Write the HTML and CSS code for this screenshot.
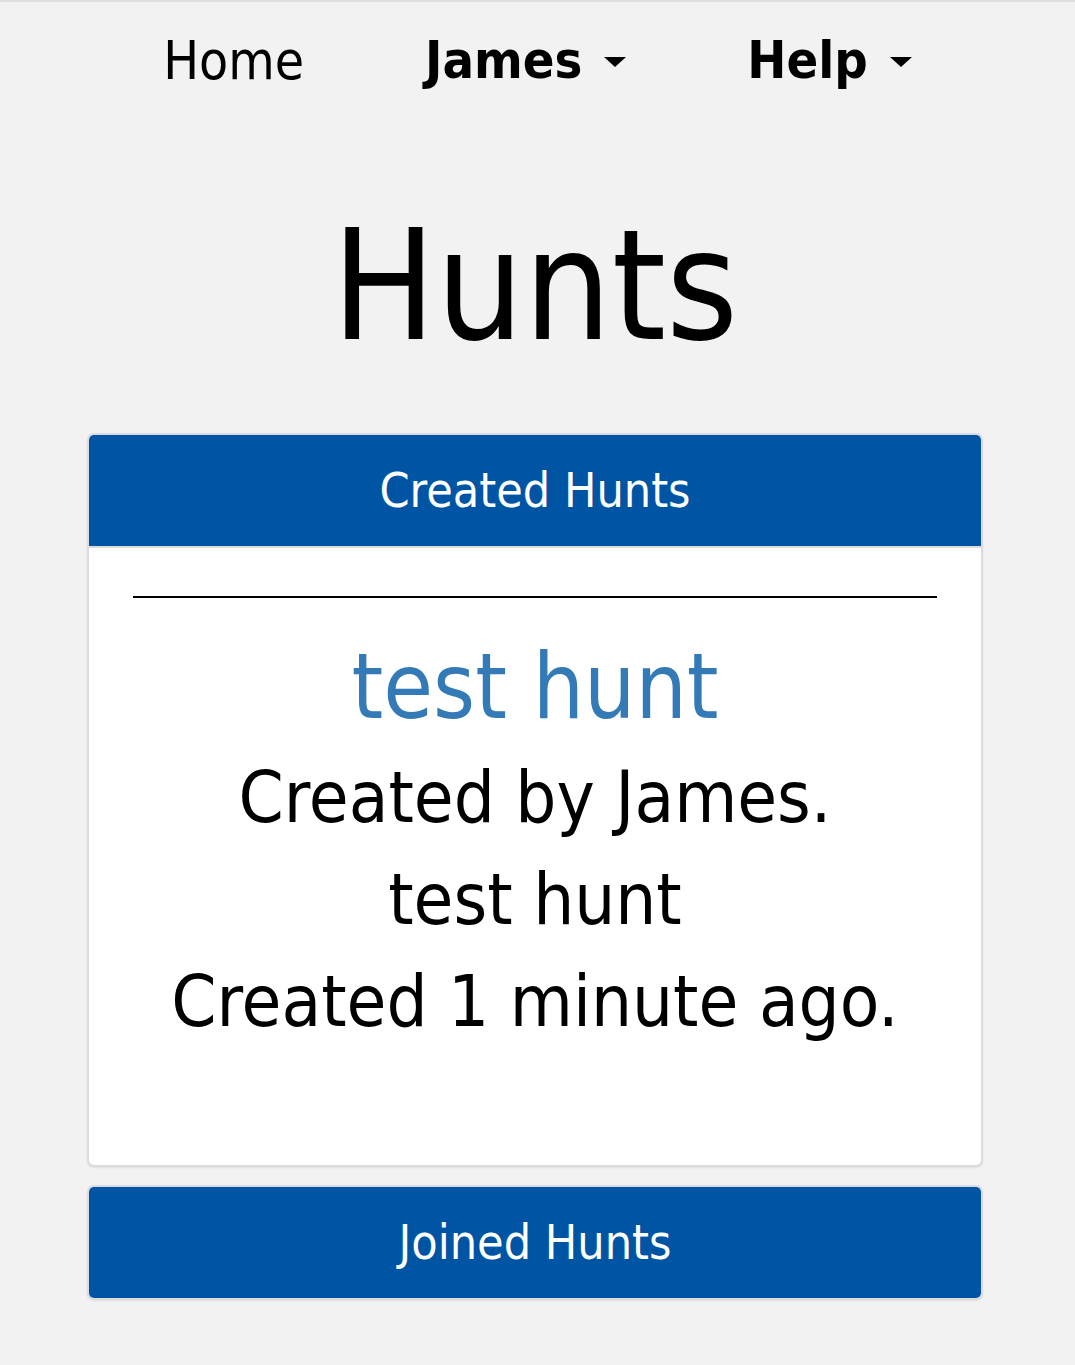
FILE: index.html
```html
<!DOCTYPE html>
<html lang="en">
<head>
<meta charset="utf-8">
<title>Hunts</title>
<link rel="stylesheet" href="styles.css">
</head>
<body>
<nav class="nav">
  <ul class="nav-list">
    <li class="nav-item"><a class="nav-link" href="#">Home</a></li>
    <li class="nav-item"><a class="nav-link nav-strong" href="#">James<span class="caret"></span></a></li>
    <li class="nav-item"><a class="nav-link nav-strong" href="#">Help<span class="caret"></span></a></li>
  </ul>
</nav>
<main class="main">
  <h1 class="title">Hunts</h1>
  <section class="card">
    <div class="card-header">Created Hunts</div>
    <div class="card-body">
      <hr class="rule">
      <a class="hunt-link" href="#">test hunt</a>
      <p class="hunt-line">Created by James.</p>
      <p class="hunt-line">test hunt</p>
      <p class="hunt-line">Created 1 minute ago.</p>
    </div>
  </section>
  <section class="card card-empty">
    <div class="card-header">Joined Hunts</div>
  </section>
</main>
</body>
</html>
```
FILE: styles.css
```css
html, body {
  margin: 0;
  padding: 0;
}
body {
  background: #f2f2f2;
  font-family: "DejaVu Sans Condensed", "DejaVu Sans", sans-serif;
  color: #000;
  border-top: 2px solid #dedede;
  min-height: 1363px;
}
.nav {
  padding-top: 28px;
}
.nav-list {
  list-style: none;
  margin: 0;
  padding: 0;
  display: flex;
  justify-content: center;
  gap: 121px;
}
.nav-link {
  display: flex;
  align-items: center;
  font-size: 53px;
  line-height: 61px;
  color: #000;
  text-decoration: none;
}
.nav-strong {
  font-weight: bold;
  font-size: 52px;
}
.caret {
  display: inline-block;
  margin-left: 22px;
  margin-top: 2px;
  width: 0;
  height: 0;
  border-top: 10px solid #000;
  border-left: 11.5px solid transparent;
  border-right: 11.5px solid transparent;
}
.main {
  padding: 0 92px 0 87px;
}
.title {
  margin: 116px 0 0;
  font-size: 154px;
  line-height: 158px;
  font-weight: normal;
  text-align: center;
}
.card {
  margin-top: 68px;
  background: #fff;
  border: 2px solid #dcdcdc;
  border-radius: 7px;
  overflow: hidden;
  box-shadow: 0 1px 2px rgba(0,0,0,0.08);
}
.card + .card {
  margin-top: 18px;
}
.card-header {
  background: #0054a4;
  color: #fff;
  height: 111px;
  line-height: 111px;
  font-size: 48px;
  text-align: center;
  border-bottom: 2px solid #dcdcdc;
}
.card-empty .card-header {
  border-bottom: 0;
}
.card-body {
  padding: 0 44px 113px;
  text-align: center;
}
.rule {
  margin: 48px 0 0;
  border: 0;
  border-top: 2px solid #000;
  height: 0;
}
.hunt-link {
  display: block;
  margin-top: 34px;
  font-size: 90px;
  line-height: 110px;
  color: #337ab7;
  text-decoration: none;
}
.hunt-line {
  margin: 0;
  font-size: 72px;
  line-height: 102px;
}
.hunt-link + .hunt-line {
  margin-top: 4px;
}
```
